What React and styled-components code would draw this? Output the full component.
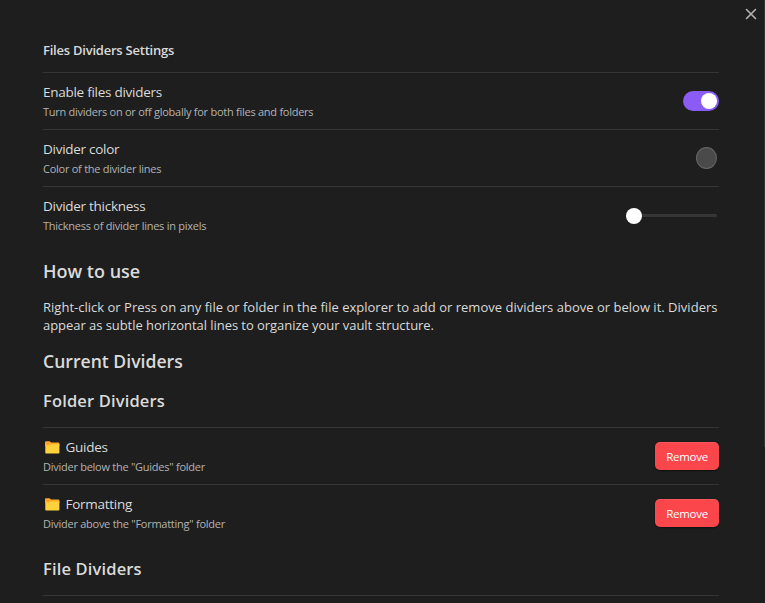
import React from "react";
import styled, { createGlobalStyle } from "styled-components";

const GlobalStyle = createGlobalStyle`
  * { box-sizing: border-box; }
  body {
    margin: 0;
    background: #1e1e1e;
    color: #dadada;
    font-family: "Open Sans", "Noto Sans", sans-serif;
    overflow: hidden;
  }
`;

const Modal = styled.main`
  position: relative;
  height: 603px;
  padding: 38px 46px 0 43px;
  overflow: hidden;
  background: #1e1e1e;
`;

const CloseButton = styled.button`
  position: absolute;
  top: 8px;
  right: 8px;
  display: flex;
  padding: 0;
  border: 0;
  background: none;
  color: #b3b3b3;
`;

const ScrollThumb = styled.div`
  position: absolute;
  top: 0;
  right: 0;
  width: 1px;
  height: 447px;
  background: #353535;
`;

const Title = styled.h1`
  margin: 0 0 10px;
  font-size: 13px;
  font-weight: 600;
  line-height: 24px;
  letter-spacing: -0.23px;
`;

const Heading = styled.h2`
  margin: ${(p) => p.$top}px 0 ${(p) => p.$bottom}px;
  font-size: ${(p) => p.$size}px;
  font-weight: 600;
  line-height: 24px;
  letter-spacing: ${(p) => p.$spacing || 0}px;
`;

const Paragraph = styled.p`
  margin: 0;
  font-size: 13px;
  line-height: 18px;
  white-space: nowrap;
`;

const Line = styled.span`
  display: block;
  letter-spacing: ${(p) => p.$spacing}px;
`;

const Row = styled.div`
  display: flex;
  align-items: center;
  justify-content: space-between;
  height: 57px;
  border-top: 1px solid #363636;
`;

const Info = styled.div`
  padding-top: 3px;
`;

const Name = styled.div`
  display: flex;
  align-items: center;
  font-size: 13.5px;
  line-height: 19px;
  letter-spacing: -0.27px;
`;

const Description = styled.div`
  font-size: 11px;
  line-height: 20px;
  letter-spacing: -0.26px;
  color: #b3b3b3;
`;

const Toggle = styled.div`
  display: flex;
  justify-content: flex-end;
  width: 36px;
  height: 20px;
  padding: 2px;
  border-radius: 10px;
  background: #8a5cf5;
`;

const ToggleKnob = styled.div`
  width: 16px;
  height: 16px;
  border-radius: 50%;
  background: #fff;
`;

const Swatch = styled.div`
  width: 21px;
  height: 22px;
  margin-right: 2px;
  border: 1px solid #666;
  border-radius: 50%;
  background: #4a4a4a;
`;

const Slider = styled.div`
  display: flex;
  align-items: center;
  width: 91px;
  margin: 1px 2px 0 0;
`;

const SliderKnob = styled.div`
  width: 16px;
  height: 16px;
  border-radius: 50%;
  background: #fff;
`;

const SliderTrack = styled.div`
  flex: 1;
  height: 3px;
  border-radius: 0 2px 2px 0;
  background: #363636;
`;

const RemoveButton = styled.button`
  width: 64px;
  height: 28px;
  padding: 2px 0 0;
  border: 0;
  border-radius: 5px;
  background: #fb464c;
  box-shadow: inset 0 1px 0 rgba(255, 255, 255, 0.1), 0 1px 2px rgba(0, 0, 0, 0.5);
  color: #fff;
  font: 400 11.5px/26px "Open Sans", sans-serif;
  letter-spacing: -0.28px;
`;

const FolderSvg = styled.svg`
  flex: none;
  width: 15px;
  height: 13px;
  margin: 0 5.5px 0 2px;
`;

function FolderIcon() {
  return (
    <FolderSvg viewBox="0 0 15 13">
      <path d="M0 1.2Q0 .2 1 .2H4.6L6 1.5H13.2Q14.4 1.5 14.4 2.6V5H0Z" fill="#ffa726" />
      <path d="M.3 4.2H5L6.1 3.3H14.4V11.8Q14.4 12.6 13.6 12.6H1.1Q.3 12.6 .3 11.8Z" fill="#ffd23c" />
    </FolderSvg>
  );
}

function Setting({ name, description, icon, children }) {
  return (
    <Row>
      <Info>
        <Name>
          {icon}
          {name}
        </Name>
        <Description>{description}</Description>
      </Info>
      {children}
    </Row>
  );
}

export default function App() {
  return (
    <>
      <GlobalStyle />
      <Modal>
        <Title>Files Dividers Settings</Title>
        <Setting name="Enable files dividers" description="Turn dividers on or off globally for both files and folders">
          <Toggle>
            <ToggleKnob />
          </Toggle>
        </Setting>
        <Setting name="Divider color" description="Color of the divider lines">
          <Swatch />
        </Setting>
        <Setting name="Divider thickness" description="Thickness of divider lines in pixels">
          <Slider>
            <SliderKnob />
            <SliderTrack />
          </Slider>
        </Setting>
        <Heading $size={18} $top={16} $bottom={15}>How to use</Heading>
        <Paragraph>
          <Line $spacing={0.013}>
            Right-click or Press on any file or folder in the file explorer to add or remove dividers above or below it. Dividers
          </Line>
          <Line $spacing={-0.05}>appear as subtle horizontal lines to organize your vault structure.</Line>
        </Paragraph>
        <Heading $size={17.6} $top={15} $bottom={16}>Current Dividers</Heading>
        <Heading $size={16.5} $top={0} $bottom={14} $spacing={0.15}>Folder Dividers</Heading>
        <Setting icon={<FolderIcon />} name="Guides" description={'Divider below the "Guides" folder'}>
          <RemoveButton>Remove</RemoveButton>
        </Setting>
        <Setting icon={<FolderIcon />} name="Formatting" description={'Divider above the "Formatting" folder'}>
          <RemoveButton>Remove</RemoveButton>
        </Setting>
        <Heading $size={16.5} $top={16} $bottom={14} $spacing={0.15}>File Dividers</Heading>
        <Row />
        <CloseButton aria-label="Close">
          <svg width="12" height="12" viewBox="0 0 12 12" fill="none" stroke="currentColor" strokeWidth="1.6" strokeLinecap="round">
            <path d="M1.5 1.5L10.5 10.5M10.5 1.5L1.5 10.5" />
          </svg>
        </CloseButton>
        <ScrollThumb />
      </Modal>
    </>
  );
}
